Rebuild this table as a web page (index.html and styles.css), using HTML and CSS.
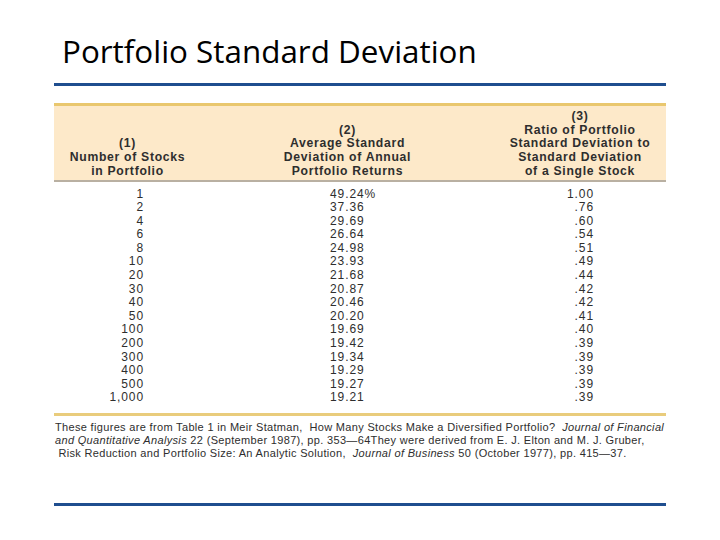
FILE: index.html
```html
<!DOCTYPE html>
<html>
<head>
<meta charset="utf-8">
<link rel="stylesheet" href="styles.css">
</head>
<body>
<div class="slide">
  <h1 class="title">Portfolio Standard Deviation</h1>
  <div class="rule-blue"></div>
  <div class="figure">
    <div class="thead">
      <div class="th c1">(1)<br>Number of Stocks<br>in Portfolio</div>
      <div class="th c2">(2)<br>Average Standard<br>Deviation of Annual<br>Portfolio Returns</div>
      <div class="th c3">(3)<br>Ratio of Portfolio<br>Standard Deviation to<br>Standard Deviation<br>of a Single Stock</div>
    </div>
    <div class="tbody">
      <div class="col d1">1<br>2<br>4<br>6<br>8<br>10<br>20<br>30<br>40<br>50<br>100<br>200<br>300<br>400<br>500<br>1,000</div>
      <div class="col d2">49.24%<br>37.36<br>29.69<br>26.64<br>24.98<br>23.93<br>21.68<br>20.87<br>20.46<br>20.20<br>19.69<br>19.42<br>19.34<br>19.29<br>19.27<br>19.21</div>
      <div class="col d3">1.00<br>.76<br>.60<br>.54<br>.51<br>.49<br>.44<br>.42<br>.42<br>.41<br>.40<br>.39<br>.39<br>.39<br>.39<br>.39</div>
    </div>
    <p class="note">These figures are from Table 1 in Meir Statman,&nbsp; How Many Stocks Make a Diversified Portfolio?&nbsp; <i>Journal of Financial</i><br><i>and Quantitative Analysis</i> 22 (September 1987), pp. 353—64They were derived from E. J. Elton and M. J. Gruber,<br>&nbsp;Risk Reduction and Portfolio Size: An Analytic Solution,&nbsp; <i>Journal of Business</i> 50 (October 1977), pp. 415—37.</p>
  </div>
  <div class="rule-blue"></div>
</div>
</body>
</html>
```

FILE: styles.css
```css
html, body {
  margin: 0;
  padding: 0;
  background: #ffffff;
}
.slide {
  width: 720px;
  height: 540px;
  padding: 0 54px;
  box-sizing: border-box;
}
.title {
  margin: 0;
  padding: 31px 0 0 8px;
  height: 52px;
  font-family: "Open Sans", sans-serif;
  font-weight: 400;
  font-size: 31.4px;
  line-height: 40px;
  color: #000000;
  white-space: nowrap;
}
.rule-blue {
  height: 3px;
  background: #1f4e8f;
}
.figure {
  padding-top: 17px;
  font-family: "Liberation Sans", Arial, sans-serif;
  color: #2e2e2e;
}
.thead {
  display: grid;
  grid-template-columns: 147px 293px 1fr;
  align-items: end;
  background: #fde9c9;
  border-top: 3px solid #e9c76e;
  border-bottom: 2px solid #b9b0a2;
  padding: 4px 0 1px;
  font-weight: 700;
  font-size: 12.2px;
  letter-spacing: 0.7px;
  line-height: 13.7px;
  text-align: center;
  white-space: nowrap;
}
.tbody {
  display: grid;
  grid-template-columns: 147px 293px 1fr;
  padding: 6px 0 8px;
  font-size: 12px;
  letter-spacing: 0.9px;
  line-height: 13.6px;
  border-bottom: 3px solid #e9cc7c;
}
.d1 { text-align: right; padding-right: 57px; }
.d2 { text-align: left; padding-left: 129px; }
.d3 { text-align: right; padding-right: 72px; }
.note {
  margin: 0;
  padding: 5px 0 0 1px;
  height: 82px;
  font-size: 11px;
  letter-spacing: 0.33px;
  line-height: 13px;
  color: #2e2e2e;
  white-space: nowrap;
}
```
